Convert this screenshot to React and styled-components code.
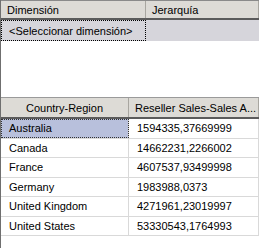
import styled, { createGlobalStyle } from "styled-components";

const rows = [
  ["Australia", "1594335,37669999"],
  ["Canada", "14662231,2266002"],
  ["France", "4607537,93499998"],
  ["Germany", "1983988,0373"],
  ["United Kingdom", "4271961,23019997"],
  ["United States", "53330543,1764993"],
];

const GlobalStyle = createGlobalStyle`
  html, body {
    margin: 0;
    padding: 0;
    background: #ffffff;
  }
  body {
    font-family: "Liberation Sans", Arial, sans-serif;
    font-size: 11px;
    color: #000000;
  }
`;

const App = () => {
  return (
    <>
      <GlobalStyle />
      <Frame>
        <DimensionPanel>
          <HeaderRow $columns="145px 1fr" $height="19px">
            <HeaderCell>Dimensión</HeaderCell>
            <HeaderCell>Jerarquía</HeaderCell>
          </HeaderRow>
          <PickRow>
            <PickCell>&lt;Seleccionar dimensión&gt;</PickCell>
            <EmptyCell />
          </PickRow>
        </DimensionPanel>
        <Splitter />
        <ResultPanel>
          <HeaderRow $columns="128px 1fr" $height="21px">
            <HeaderCell $center>Country-Region</HeaderCell>
            <HeaderCell>Reseller Sales-Sales A...</HeaderCell>
          </HeaderRow>
          {rows.map(([country, amount], index) => (
            <DataRow key={country}>
              <DataCell $selected={index === 0}>{country}</DataCell>
              <DataCell>{amount}</DataCell>
            </DataRow>
          ))}
        </ResultPanel>
      </Frame>
    </>
  );
};

const Frame = styled.div`
  width: 259px;
  height: 248px;
  overflow: hidden;
  display: flex;
  flex-direction: column;
  border-left: 1px solid #6f6f6f;
  box-sizing: border-box;
`;

const DimensionPanel = styled.div`
  height: 94px;
  border-top: 1px solid #8a8a8a;
  background: #ffffff;
  box-sizing: border-box;
`;

const HeaderRow = styled.div`
  display: grid;
  grid-template-columns: ${(p) => p.$columns};
  height: ${(p) => p.$height};
  background: #dddbd6;
  border-bottom: 2px solid #5b5b5b;
  box-sizing: border-box;
`;

const HeaderCell = styled.div`
  display: flex;
  align-items: center;
  justify-content: ${(p) => (p.$center ? "center" : "flex-start")};
  padding: 0 6px;
  border-right: 1px solid #a8a6a0;
  white-space: nowrap;
  overflow: hidden;
`;

const PickRow = styled.div`
  display: grid;
  grid-template-columns: 145px 1fr;
  height: 21px;
  background: #d6d5db;
`;

const PickCell = styled.div`
  display: flex;
  align-items: center;
  padding: 0 7px;
  border: 1px dotted #000000;
  white-space: nowrap;
  overflow: hidden;
`;

const EmptyCell = styled.div``;

const Splitter = styled.div`
  height: 3px;
  background: #ffffff;
  border-bottom: 1px solid #9a9a9a;
`;

const ResultPanel = styled.div`
  flex: 1;
  background: #ffffff;
`;

const DataRow = styled.div`
  display: grid;
  grid-template-columns: 128px 1fr;
  height: 19.5px;
  border-bottom: 1px solid #d9d9d9;
  box-sizing: border-box;
`;

const DataCell = styled.div`
  display: flex;
  align-items: center;
  padding: 0 8px;
  border-right: 1px solid #d9d9d9;
  background: ${(p) => (p.$selected ? "#b8c0dc" : "transparent")};
  outline: ${(p) => (p.$selected ? "1px dotted #333333" : "none")};
  outline-offset: -1px;
  white-space: nowrap;
  overflow: hidden;
`;

export default App;
